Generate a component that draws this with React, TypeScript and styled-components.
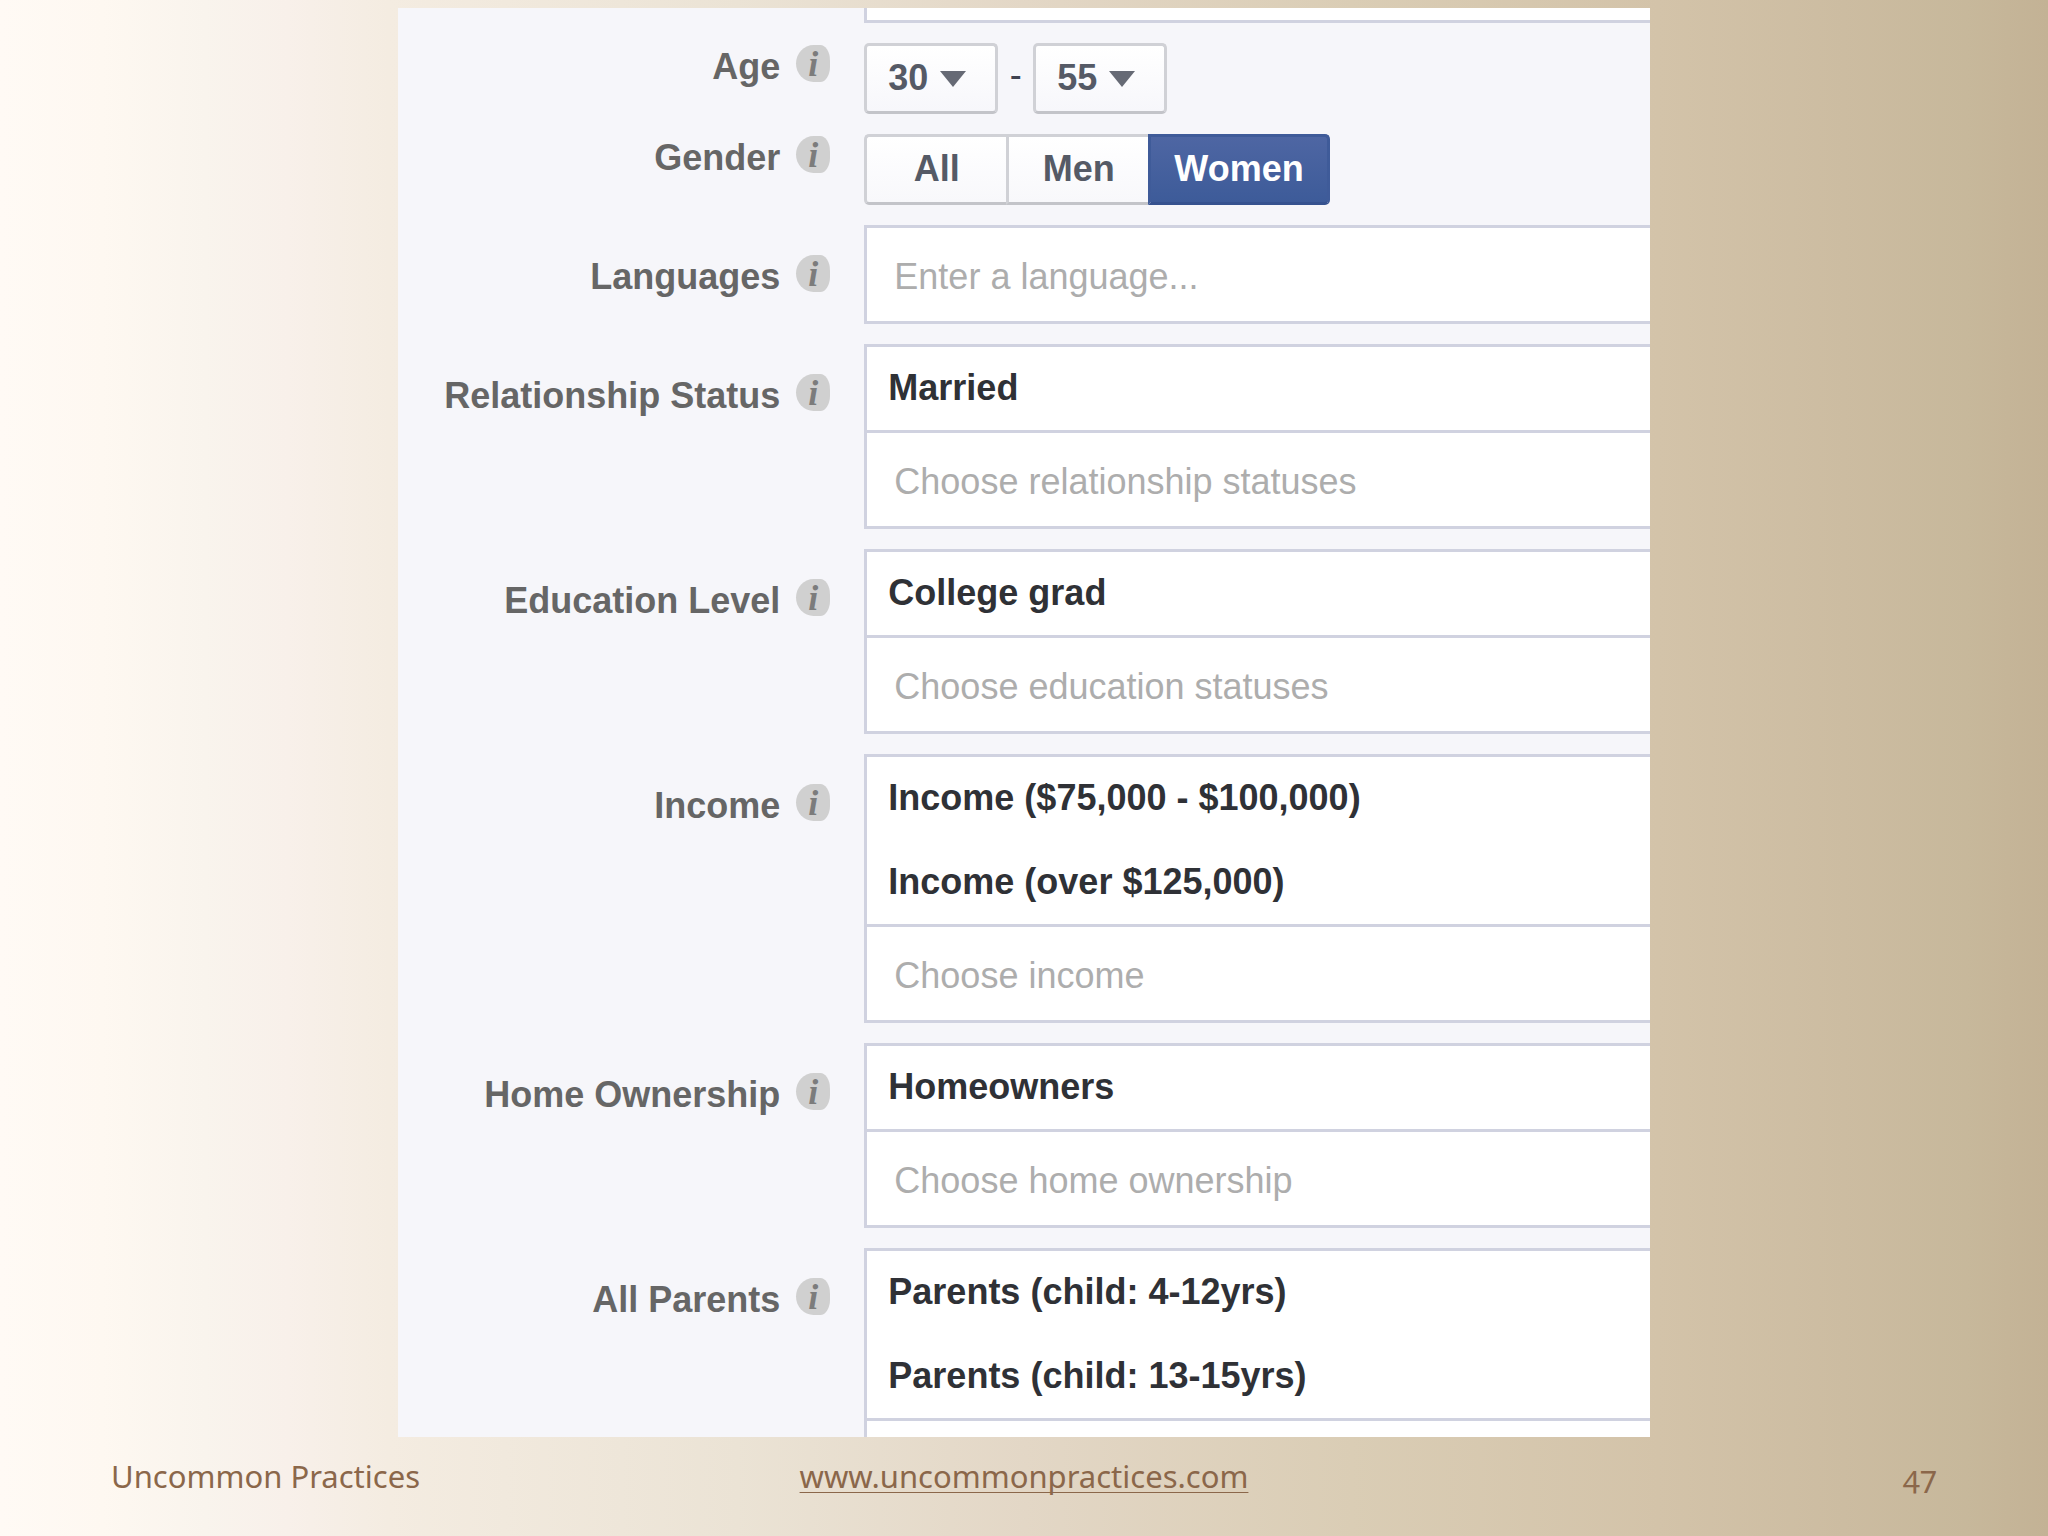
import React, { useState } from "react";
import styled, { createGlobalStyle } from "styled-components";

const GlobalStyle = createGlobalStyle`
  *, *::before, *::after { box-sizing: border-box; }
  body {
    margin: 0;
    font-family: "Liberation Sans", Arial, sans-serif;
  }
`;

const line = "#d0d2e0";

const Slide = styled.div`
  display: flex;
  flex-direction: column;
  height: 100vh;
  padding-top: 8px;
  background: linear-gradient(
    90deg,
    #fffaf5 0%,
    #fef8f1 5%,
    #f9f4ed 10%,
    #f8f0ea 14%,
    #f4ece1 19%,
    #ebe3d5 36%,
    #e3d7c6 50%,
    #dacdb5 66%,
    #d3c3a9 81%,
    #ccbca1 90%,
    #c7b89b 96%,
    #c3b295 100%
  );
`;

const Panel = styled.form`
  flex: 1;
  min-height: 0;
  display: flex;
  flex-direction: column;
  gap: 20px;
  width: 61.1%;
  margin-left: 19.45%;
  overflow: hidden;
  background: #f6f6fa;
`;

const FormRow = styled.div`
  flex: none;
  display: grid;
  grid-template-columns: 466px minmax(0, 1fr);
`;

const LabelCell = styled.div<{ $deep?: boolean }>`
  display: flex;
  justify-content: flex-end;
  align-items: flex-start;
  gap: 16px;
  padding: ${(p) => (p.$deep ? "30px" : "2px")} 34px 0 0;
`;

const Label = styled.label`
  padding-top: 2px;
  font-size: 36px;
  line-height: 40px;
  font-weight: bold;
  color: #666;
  white-space: nowrap;
`;

const InfoButton = styled.button`
  width: 34px;
  height: 37px;
  padding: 0;
  border: 0;
  border-radius: 18px 10px 10px 18px / 19px 16px 16px 19px;
  background: #d0d0d0;
  color: #7c7c7c;
  font: italic bold 36px/36px "Liberation Serif", serif;
  text-align: center;
`;

const Field = styled.div`
  border: 3px solid ${line};
  border-right: 0;
  background: #fff;
`;

const CutField = styled.input`
  grid-column: 2;
  height: 15px;
  padding: 0;
  border: 3px solid ${line};
  border-width: 0 0 3px 3px;
  border-radius: 0;
  background: #fff;
`;

const TokenList = styled.ul`
  display: flex;
  flex-direction: column;
  gap: 1px;
  margin: 0;
  padding: 0;
  list-style: none;
  border-bottom: 3px solid ${line};
`;

const Token = styled.li`
  height: 83px;
  padding-left: 21px;
  font-size: 36px;
  line-height: 81px;
  font-weight: bold;
  color: #2f3136;
  white-space: nowrap;
`;

const TextInput = styled.input`
  display: block;
  width: 100%;
  height: 93px;
  padding: 4px 0 0 27px;
  border: 0;
  outline: 0;
  background: transparent;
  font: 36px "Liberation Sans", Arial, sans-serif;
  color: #333;
  &::placeholder {
    color: #adadad;
    opacity: 1;
  }
`;

const Controls = styled.div`
  display: flex;
`;

const SelectBox = styled.div`
  position: relative;
  width: 134px;
  height: 71px;
`;

const Select = styled.select`
  appearance: none;
  width: 100%;
  height: 100%;
  padding: 0 0 2px 21px;
  border: 3px solid #d0d1d6;
  border-bottom-color: #c3c4c9;
  border-radius: 5px;
  background: linear-gradient(#fff, #f7f7fb);
  font: bold 36px "Liberation Sans", Arial, sans-serif;
  color: #555a66;
`;

const Caret = styled.svg`
  position: absolute;
  top: 28px;
  right: 32px;
  width: 26px;
  height: 16px;
  fill: #666a75;
  pointer-events: none;
`;

const Dash = styled.span`
  width: 35px;
  font-size: 36px;
  line-height: 64px;
  text-align: center;
  color: #3f4250;
`;

const Segment = styled.button<{ $on: boolean }>`
  min-width: 142px;
  height: 71px;
  padding: 0 23px 2px;
  border: 3px solid ${(p) => (p.$on ? "#3f5b99" : "#d0d1d6")};
  border-right-width: ${(p) => (p.$on ? "3px" : "0")};
  border-bottom-color: ${(p) => (p.$on ? "#36528f" : "#c3c4c9")};
  background: ${(p) =>
    p.$on ? "linear-gradient(#4e66a3, #3d5b99)" : "linear-gradient(#fff, #f8f8fb)"};
  font: bold 36px "Liberation Sans", Arial, sans-serif;
  color: ${(p) => (p.$on ? "#fff" : "#555a66")};
  &:first-child {
    border-radius: 5px 0 0 5px;
  }
  &:last-child {
    border-radius: 0 5px 5px 0;
  }
`;

const Footer = styled.footer`
  flex: none;
  display: grid;
  grid-template-columns: 1fr auto 1fr;
  height: 99px;
  padding: 17px 111px 0;
  font-family: "Noto Sans", sans-serif;
  font-size: 31px;
  line-height: 44px;
  font-variant-numeric: oldstyle-nums;
  color: #8b674a;
`;

const SiteLink = styled.a`
  color: inherit;
  text-decoration: underline;
  text-decoration-thickness: 1px;
  text-underline-offset: 4px;
  text-decoration-skip-ink: none;
`;

const PageNumber = styled.span`
  text-align: right;
`;

function RowLabel({ text, id, deep }: { text: string; id: string; deep?: boolean }) {
  return (
    <LabelCell $deep={deep}>
      <Label htmlFor={id}>{text}</Label>
      <InfoButton type="button" aria-label={`About ${text}`}>
        i
      </InfoButton>
    </LabelCell>
  );
}

function AgeSelect({ id, label, value }: { id: string; label: string; value: number }) {
  return (
    <SelectBox>
      <Select id={id} aria-label={label} defaultValue={value}>
        <option value={value}>{value}</option>
      </Select>
      <Caret viewBox="0 0 26 16" aria-hidden="true">
        <path d="M0 0h26L13 16z" />
      </Caret>
    </SelectBox>
  );
}

const fields = [
  { id: "languages", label: "Languages", tokens: [], hint: "Enter a language..." },
  { id: "relationship", label: "Relationship Status", tokens: ["Married"], hint: "Choose relationship statuses" },
  { id: "education", label: "Education Level", tokens: ["College grad"], hint: "Choose education statuses" },
  {
    id: "income",
    label: "Income",
    tokens: ["Income ($75,000 - $100,000)", "Income (over $125,000)"],
    hint: "Choose income",
  },
  { id: "home", label: "Home Ownership", tokens: ["Homeowners"], hint: "Choose home ownership" },
  {
    id: "parents",
    label: "All Parents",
    tokens: ["Parents (child: 4-12yrs)", "Parents (child: 13-15yrs)"],
    hint: "",
  },
];

export default function App() {
  const [gender, setGender] = useState("Women");
  return (
    <Slide>
      <GlobalStyle />
      <Panel>
        <FormRow>
          <CutField aria-label="Location" />
        </FormRow>
        <FormRow>
          <RowLabel text="Age" id="age-from" />
          <Controls>
            <AgeSelect id="age-from" label="Age from" value={30} />
            <Dash>-</Dash>
            <AgeSelect id="age-to" label="Age to" value={55} />
          </Controls>
        </FormRow>
        <FormRow>
          <RowLabel text="Gender" id="gender-all" />
          <Controls role="group" aria-label="Gender">
            {["All", "Men", "Women"].map((g) => (
              <Segment
                key={g}
                id={`gender-${g.toLowerCase()}`}
                type="button"
                $on={gender === g}
                aria-pressed={gender === g}
                onClick={() => setGender(g)}
              >
                {g}
              </Segment>
            ))}
          </Controls>
        </FormRow>
        {fields.map((f) => (
          <FormRow key={f.id}>
            <RowLabel text={f.label} id={f.id} deep />
            <Field>
              {f.tokens.length > 0 && (
                <TokenList>
                  {f.tokens.map((t) => (
                    <Token key={t}>{t}</Token>
                  ))}
                </TokenList>
              )}
              <TextInput id={f.id} type="text" placeholder={f.hint} />
            </Field>
          </FormRow>
        ))}
      </Panel>
      <Footer>
        <span>Uncommon Practices</span>
        <SiteLink href="http://www.uncommonpractices.com">www.uncommonpractices.com</SiteLink>
        <PageNumber>47</PageNumber>
      </Footer>
    </Slide>
  );
}
